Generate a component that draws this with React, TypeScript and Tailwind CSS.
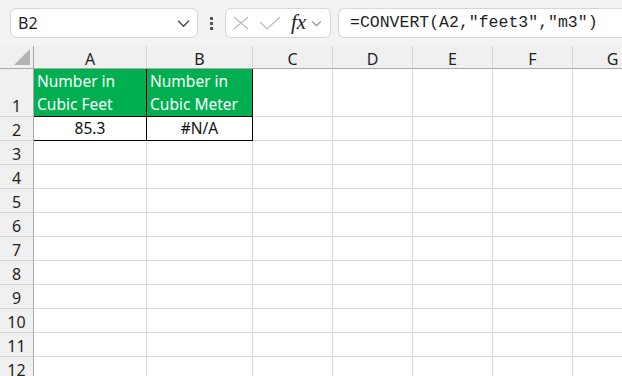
import React from 'react';

const cols = ['A', 'B', 'C', 'D', 'E', 'F', 'G'];
const rows = Array.from({ length: 12 }, (_, i) => i + 1);

const font = { fontFamily: '"Noto Sans", "Liberation Sans", sans-serif' };

const Chevron: React.FC<{ className?: string }> = ({ className }) => (
  <svg viewBox="0 0 12 8" className={className} fill="none" stroke="currentColor" strokeWidth="1.2">
    <path d="M1 1.5 6 6.5 11 1.5" />
  </svg>
);

const TopBar: React.FC = () => (
  <div className="flex items-center h-[46px] bg-[#f3f3f3] pl-[10px]">
    <div className="flex items-center justify-between w-[188px] h-[30px] bg-white border border-[#d6d6d6] rounded-[6px] pl-[7px] pr-[7px]">
      <span className="text-[16px] text-[#1f1f1f]">B2</span>
      <Chevron className="w-[13px] h-[9px] text-[#444]" />
    </div>
    <div className="flex flex-col items-center justify-center gap-[2px] w-[27px]">
      <span className="block w-[3px] h-[3px] bg-[#555]" />
      <span className="block w-[3px] h-[3px] bg-[#555]" />
      <span className="block w-[3px] h-[3px] bg-[#555]" />
    </div>
    <div className="flex items-center w-[106px] h-[30px] bg-white border border-[#d6d6d6] rounded-[6px] pl-[7px]">
      <svg viewBox="0 0 16 14" className="w-[16px] h-[14px] text-[#b8b8b8]" fill="none" stroke="currentColor" strokeWidth="1.1">
        <path d="M1 1 15 13M15 1 1 13" />
      </svg>
      <svg viewBox="0 0 22 14" className="w-[22px] h-[14px] ml-[10px] text-[#b8b8b8]" fill="none" stroke="currentColor" strokeWidth="1.1">
        <path d="M1 6 8 13 21 1" />
      </svg>
      <span
        className="ml-[10px] text-[21px] italic text-[#222] leading-none -mt-[2px]"
        style={{ fontFamily: '"Liberation Serif", "DejaVu Serif", serif' }}
      >
        fx
      </span>
      <Chevron className="ml-[5px] w-[11px] h-[7px] text-[#8a8a8a]" />
    </div>
    <div className="flex items-center flex-1 h-[30px] ml-[7px] bg-white border border-r-0 border-[#d6d6d6] rounded-l-[6px] pl-[11px]">
      <span className="text-[16.5px] text-[#1f1f1f]" style={{ fontFamily: '"Liberation Mono", monospace' }}>
        =CONVERT(A2,"feet3","m3")
      </span>
    </div>
  </div>
);

const App: React.FC = () => {
  return (
    <div className="w-[622px] h-[376px] overflow-hidden bg-white" style={font}>
      <TopBar />
      <div className="grid grid-cols-[34px_113px_106px_80px_80px_80px_80px_80px] grid-rows-[23px_48px_repeat(11,24px)] w-[653px]">
        <div className="relative bg-[#f0f0f0] border-r border-b border-[#a8a8a8]">
          <div
            className="absolute right-[3px] bottom-[3px] w-[16px] h-[16px] bg-[#b4b4b4]"
            style={{ clipPath: 'polygon(100% 0, 100% 100%, 0 100%)' }}
          />
        </div>
        {cols.map((c) => (
          <div
            key={c}
            className="flex items-end justify-center pb-[1px] bg-[#f0f0f0] border-r border-[#d4d4d4] border-b border-b-[#a8a8a8] text-[16px] text-[#1f1f1f] leading-none"
          >
            {c}
          </div>
        ))}
        {rows.map((r) => (
          <React.Fragment key={r}>
            <div className="flex items-end justify-center pb-[2px] bg-[#f0f0f0] border-r border-r-[#a8a8a8] border-b border-b-[#d4d4d4] text-[16px] text-[#1f1f1f] leading-none">
              {r}
            </div>
            {cols.map((c) => {
              if (r === 1 && (c === 'A' || c === 'B')) {
                return (
                  <div
                    key={c}
                    className="flex flex-col justify-center bg-[#00b050] text-white text-[15.5px] leading-[23px] pl-[3px] border-b border-r border-black"
                  >
                    <span>Number in</span>
                    <span>{c === 'A' ? 'Cubic Feet' : 'Cubic Meter'}</span>
                  </div>
                );
              }
              if (r === 2 && (c === 'A' || c === 'B')) {
                return (
                  <div
                    key={c}
                    className="flex items-center justify-center border-b border-r border-black text-[15.5px] text-[#111]"
                  >
                    {c === 'A' ? '85.3' : '#N/A'}
                  </div>
                );
              }
              return <div key={c} className="border-r border-b border-[#dadada]" />;
            })}
          </React.Fragment>
        ))}
      </div>
    </div>
  );
};

export default App;
